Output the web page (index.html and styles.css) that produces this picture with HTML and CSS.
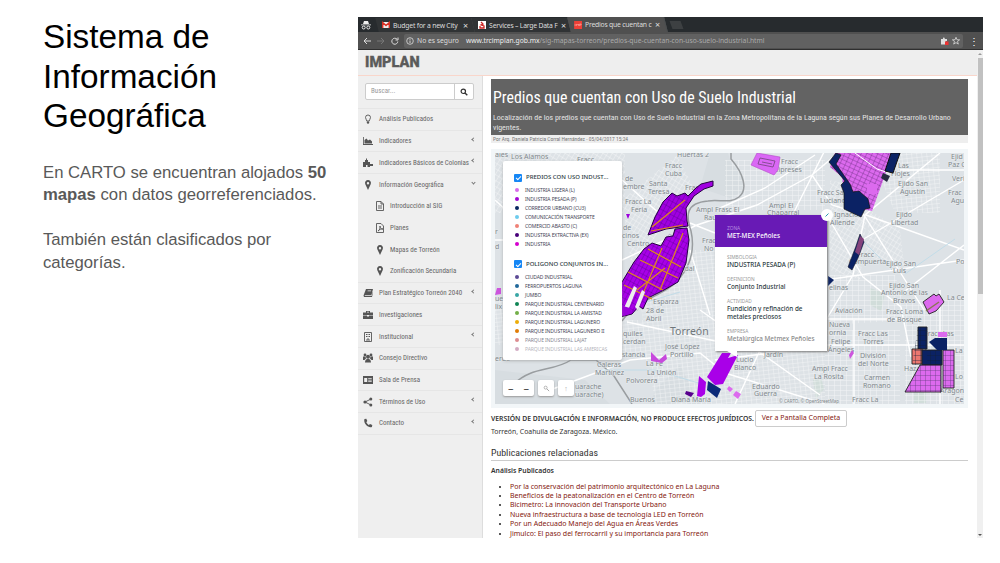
FILE: index.html
```html
<!DOCTYPE html>
<html lang="es">
<head>
<meta charset="utf-8">
<title>Sistema de Información Geográfica</title>
<link rel="stylesheet" href="styles.css">
</head>
<body>
<main class="slide">
<section class="intro">
<h1>Sistema de<br>Información<br>Geográfica</h1>
<p>En CARTO se encuentran alojados <b>50</b><br><b>mapas</b> con datos georreferenciados.</p>
<p>También están clasificados por<br>categorías.</p>
</section>
<section class="browser">
<div class="tabs">
<svg class="incog" viewBox="0 0 10 10"><path d="M3 1h4l1 3H2zM0 4.5h10v.8H0z" fill="#eee"/><circle cx="2.7" cy="7.5" r="1.5" fill="none" stroke="#eee"/><circle cx="7.3" cy="7.5" r="1.5" fill="none" stroke="#eee"/></svg>
<div class="tab"><svg class="fav" viewBox="0 0 8 8"><path fill="#eee" d="M0 1h8v6H0z"/><path d="M.7 7V1.5L4 4.500l3.300-3V7" fill="none" stroke="#d93025" stroke-width="1.4"/></svg><span class="label">Budget for a new City</span><i>×</i></div>
<div class="tab"><svg class="fav" viewBox="0 0 8 8"><path fill="#fff" d="M0 0h8v8H0z"/><path d="M3 1l2 2-2 1 3 1v2H2V5" fill="none" stroke="#c22" stroke-width="1.3"/></svg><span class="label">Services – Large Data F</span><i>×</i></div>
<div class="tab active"><svg class="fav" viewBox="0 0 8 8"><path fill="#ee4037" d="M0 0h8v8H0z"/><path d="M1 3v2M2.500 5V3l1 1 1-1v2M5.500 5V3H7v1H5.500" fill="none" stroke="#ffb0a8" stroke-width=".6"/></svg><span class="label">Predios que cuentan c</span><i>×</i></div>
<span class="newtab"></span>
</div>
<div class="toolbar">
<svg class="nav" viewBox="0 0 38 10"><path d="M9 5H2M5 2L2 5l3 3" stroke="#ddd" fill="none"/><path d="M15 5h7M19 2l3 3-3 3" stroke="#777" fill="none"/><path d="M35 3.200a3 3 0 1 0 .8 2.300M36 1.500v2.500h-2.500" stroke="#ddd" fill="none"/></svg>
<div class="address"><svg class="info" viewBox="0 0 8 8"><circle cx="4" cy="4" r="3.300" fill="none" stroke="#ddd" stroke-width=".8"/><path d="M4 3.500v2.500M4 1.800v1" stroke="#ddd" stroke-width=".9"/></svg><span class="insecure">No es seguro</span><span class="url"><b>www.trcimplan.gob.mx</b>/sig-mapas-torreon/predios-que-cuentan-con-uso-suelo-industrial.html</span>
<svg class="marks" viewBox="0 0 22 10"><path d="M2 3h2c-.5-2 2-2 1.800 0H8v2c-2-.5-2 2 0 2v1.500H2z" fill="#ddd"/><path d="M6 5.500h3.500V9H6z" fill="#e33"/><path d="M17 1.300l1 2.500h2.600l-2.100 1.700.8 2.600-2.300-1.500-2.300 1.500.8-2.600-2.100-1.700H16z" fill="none" stroke="#ddd" stroke-width=".8"/></svg></div>
<span class="dots">⋮</span>
</div>
<div class="page">
<div class="app">
<header>IMPLAN</header>
<div class="columns">
<nav>
<div class="search"><span>Buscar...</span><svg viewBox="0 0 8 8"><circle cx="3.300" cy="3.300" r="2.200" fill="none" stroke="#333" stroke-width="1.200"/><path d="M5 5l2.300 2.300" stroke="#333" stroke-width="1.400"/></svg></div>
<ul>
<li><svg viewBox="0 0 10 10"><path d="M2.500 3.500a2.500 2.500 0 1 1 5 0C7.500 5 6.300 5.500 6.200 7H3.800C3.700 5.500 2.500 5 2.500 3.500z" class="line"/><path d="M3.800 7.500h2.400V9L5 10 3.800 9z"/></svg><span>Análisis Publicados</span></li>
<li><svg viewBox="0 0 10 10"><path d="M0 1h.8v7H10v1H0zM1.500 7.500V4l2-1.500L5 4.500l2-1 2 2v2z"/></svg><span>Indicadores</span><em></em></li>
<li><svg viewBox="0 0 10 10"><path d="M0 4h2V2h1V.5h1V2h1v2h2v2h3v2H7v1H4.500V7H3v2H0z"/></svg><span>Indicadores Básicos de Colonias</span><em></em></li>
<li class="open"><svg viewBox="0 0 10 10"><path fill-rule="evenodd" d="M5 0a3 3 0 0 0-2.800 4L5 10l2.800-6A3 3 0 0 0 5 0zm0 2a1.200 1.200 0 1 1 0 2.400A1.200 1.200 0 0 1 5 2z"/></svg><span>Información Geográfica</span><em class="down"></em></li>
<li class="sub"><svg viewBox="0 0 10 10"><path d="M1.500.5h4.500l2.500 2.500v6.500h-7zM6 .5V3h2.500M3 5h4M3 7h4" class="line"/></svg><span>Introducción al SIG</span></li>
<li class="sub"><svg viewBox="0 0 10 10"><path d="M1.500.5h4.500l2.500 2.500v6.500h-7zM3 8c2-1 2-3 2-5 0 2 1 3 3 3-2 0-3 0-5 2" class="line"/></svg><span>Planes</span></li>
<li class="sub"><svg viewBox="0 0 10 10"><path fill-rule="evenodd" d="M5 0a3 3 0 0 0-2.800 4L5 10l2.800-6A3 3 0 0 0 5 0zm0 2a1.200 1.200 0 1 1 0 2.400A1.200 1.200 0 0 1 5 2z"/></svg><span>Mapas de Torreón</span></li>
<li class="sub last"><svg viewBox="0 0 10 10"><path fill-rule="evenodd" d="M5 0a3 3 0 0 0-2.800 4L5 10l2.800-6A3 3 0 0 0 5 0zm0 2a1.200 1.200 0 1 1 0 2.400A1.200 1.200 0 0 1 5 2z"/></svg><span>Zonificación Secundaria</span></li>
<li><svg viewBox="0 0 10 10"><path fill-rule="evenodd" d="M3 1h7L8.500 7H1.800v.8h7L9.700 4l.3.500L9 9H1L.5 7.500zM4.500 3.300h3.500l.2-.8H4.700z"/></svg><span>Plan Estratégico Torreón 2040</span><em></em></li>
<li><svg viewBox="0 0 10 10"><path fill-rule="evenodd" d="M3 1h4v1.500h3V5.500H6V5H4v.5H0v-3h3zm1 .8v.7h2v-.7zM0 6h4v.6h2V6h4v3H0z"/></svg><span>Investigaciones</span></li>
<li><svg viewBox="0 0 10 10"><path d="M1.500.5h7v9h-7zM4 9.500V7h2v2.500" class="line"/><path d="M3 2h1v1H3zm3 0h1v1H6zM4.500 2h1v1h-1zM3 4h1v1H3zm3 0h1v1H6zM4.500 4h1v1h-1z"/></svg><span>Institucional</span><em></em></li>
<li><svg viewBox="0 0 10 10"><circle cx="2" cy="2" r="1.400"/><circle cx="8" cy="2" r="1.400"/><circle cx="5" cy="3.700" r="2"/><path d="M0 3.500h2.500l.5 2L1.500 7H0zM10 3.500H7.500L7 5.500 8.500 7H10zM2 9.500c0-5 6-5 6 0z"/></svg><span>Consejo Directivo</span></li>
<li><svg viewBox="0 0 10 10"><path fill-rule="evenodd" d="M0 1h10v8H0zm1.200 2v4h3V3zm4 .3v.8h3.500v-.8zm0 1.500v.8h3.500v-.8zm0 1.500v.8h3.500v-.8z"/></svg><span>Sala de Prensa</span></li>
<li><svg viewBox="0 0 10 10"><path d="M8 2L2 5l6 3" class="line"/><circle cx="2" cy="5" r="1.600"/><circle cx="7.800" cy="2" r="1.500"/><circle cx="7.800" cy="8" r="1.500"/></svg><span>Términos de Uso</span><em></em></li>
<li><svg viewBox="0 0 10 10"><path d="M1.500 1l1.800-.3 1 2.300-1 1.200c.7 1.300 1.300 2 2.600 2.700L7 5.900l2.300 1.200-.4 1.800C5 10.500 0 5 1.500 1z"/></svg><span>Contacto</span><em></em></li>
</ul>
</nav>
<article>
<div class="hero"><h2>Predios que cuentan con Uso de Suelo Industrial</h2><p>Localización de los predios que cuentan con Uso de Suelo Industrial en la Zona Metropolitana de la Laguna según sus Planes de Desarrollo Urbano<br>vigentes.</p></div>
<div class="byline"><span>Por Arq. Daniela Patricia Corral Hernández - 05/04/2017 15:24</span></div>
<div class="map">
<svg class="canvas" viewBox="495 153 469 251">
<defs>
<pattern id="g1" width="5" height="4" patternUnits="userSpaceOnUse" patternTransform="rotate(-6)"><path d="M0 0H5M0 0V4" stroke="#fff" stroke-width="1"/></pattern>
<pattern id="g2" width="4" height="5" patternUnits="userSpaceOnUse" patternTransform="rotate(32)"><path d="M0 0H4M0 0V5" stroke="#fff" stroke-width="1"/></pattern>
<pattern id="g3" width="6" height="5" patternUnits="userSpaceOnUse"><path d="M0 0H6M0 0V5" stroke="#fff" stroke-width="1"/></pattern>
<pattern id="lot" width="4" height="6" patternUnits="userSpaceOnUse" patternTransform="rotate(28)"><path d="M0 0H4M0 0V6" stroke="#37006a" stroke-width=".5"/></pattern>
<pattern id="lotp" width="5" height="4" patternUnits="userSpaceOnUse" patternTransform="rotate(25)"><path d="M0 0H5M0 0V4" stroke="#602878" stroke-width=".7"/></pattern>
<pattern id="lotn" width="5" height="5" patternUnits="userSpaceOnUse"><path d="M0 0H5M0 0V5" stroke="#111e35" stroke-width=".7"/></pattern>
</defs>
<path fill="#dde2e6" d="M495 153h469v251H495z"/>
<path fill="#d7dde1" d="M710 153h18l3 10 13 15-2 14-12 6-30-10zM495 370l90 10 25 24H495zM655 390l25-25 20 39h-50z"/>
<path fill="#d1ddda" d="M870 288l15 5-4 18-11-6zM813 380l8-3 3 12-8 10zM914 392l12-3v14h-12z"/>
<g opacity=".65"><path fill="url(#g2)" d="M495 153h130v60H495zM622 200l55-45 15 30-60 85zM830 180l40 10-10 90-30-10zM870 210l30 20 5 40-40-15z"/><path fill="url(#g1)" d="M640 300l55-50 20 0v154h-60zM715 340l110 10v54H715zM622 320h40v50l-40-20zM870 153h70v60h-45zM495 300h127v45H495z"/><path fill="url(#g3)" d="M825 330h75v74h-75zM830 275h65l15 45-80 5zM725 160h100v50H725zM905 300h59v104h-59z"/></g>
<g fill="none" stroke="#fff" stroke-width="1.400"><path d="M622 260l75-35 60-20 55-30 26-22M720 208l45-20 50-33M690 223l25 10M812 175l20 30 32 10 60 95M940 153l-75 62-12 60-30 50M827 345h137M825 280l139-20M870 155v15M495 200l60 55M550 390l80-30 70-7 25 20 100 31M700 310l120 85M715 360l109-14M854 320v84M940 290v114M825 212l38 65 38 30 10 50M900 170h64M866 215l98 35M824 152l-30 60M622 180l50 45M690 250l20 65M825 319h90M627 322l93 20M760 350l-25 54M495 240h30M862 240l102-60M900 295l64-50"/></g>
<path d="M731 153v6c13 15 17 31 8 38s-20 2-31 4c-23 2-22 15-17 30 4 18-1 35-12 48-14 17-41 19-57 42M514 384c18-18 39-12 57-24l25 0 18 16 18 28" fill="none" stroke="#999da0" stroke-width="1.500"/>
<path d="M600 370h55l50 15M630 307l50-15M862 240l30 30M905 274l50-35" fill="none" stroke="#c2dce8" stroke-width="1"/>
<g class="places">
<text x="511" y="159">Los Alamos</text><text x="495" y="157">ales</text><text x="577" y="162">Fracc</text><text x="677" y="157">Huertas 2</text><text x="665" y="168">Fracc</text><text x="665" y="175.500">Cuba</text><text x="649" y="186">Santa</text><text x="648" y="193.500">Teresa</text><text x="625" y="181">de</text><text x="623" y="188.500">embre</text><text x="625" y="204">Fracc La</text><text x="631" y="211.500">Feria</text><text x="685" y="190">Fracc</text><text x="696" y="212">Ampl Frasc El</text><text x="704" y="219.500">Raúl</text><text x="769" y="208">Ampl El</text><text x="767" y="215">Chaparral</text><text x="781" y="164">Fracc</text><text x="774" y="171.500">Cipreses</text><text x="817" y="195">Fracc San</text><text x="820" y="202.500">Luciano</text><text x="834" y="217">Ignacio</text><text x="830" y="224.500">Allende</text><text x="898" y="186">Ejido San</text><text x="900" y="193.500">Agustín</text><text x="896" y="217">Ejido</text><text x="891" y="224.500">Libertad</text><text x="898" y="168">Las</text><text x="891" y="175.500">Flojes</text><text x="951" y="159">Ejid</text><text x="948" y="166.500">Paz C</text><text x="952" y="181">Veri</text><text x="948" y="195">Frac</text><text x="951" y="202.500">Agu</text><text x="956" y="264">Po</text><text x="857" y="256.500">Fracc</text><text x="849" y="264">Compuerta</text><text x="886" y="266">Ejido San</text><text x="893" y="273">Luis</text><text x="702" y="243">Frac</text><text x="704" y="250.500">No</text><text x="677" y="271">Ejidal</text><text x="623" y="230">de</text><text x="622" y="238">cinos</text><text x="627" y="246">Centro</text><text x="653" y="304">Esparza</text><text x="646" y="313">28 de</text><text x="646" y="320.500">Abril</text><text x="623" y="336">quiles</text><text x="623" y="343.500">cerdan</text><text x="622" y="357">stancia</text><text x="597" y="367">Caleras</text><text x="595" y="374.500">Martínez</text><text x="665" y="349">José López</text><text x="670" y="356.500">Portillo</text><text x="646" y="366">La Fe</text><text x="647" y="375">La Unión</text><text x="626" y="383">Polvorera</text><text x="630" y="402">Buenos</text><text x="671" y="402">Diana María</text><text x="736" y="362">Lucio</text><text x="734" y="369.500">Blanco</text><text x="764" y="357">Jardín</text><text x="752" y="388.500">Eduardo</text><text x="754" y="396">Guerra</text><text x="812" y="371">Ampl Fracc</text><text x="814" y="378.500">La Rosita</text><text x="829" y="290">elinas</text><text x="835" y="313">Aviación</text><text x="829" y="327">Nueva</text><text x="829" y="334.500">ornia</text><text x="831" y="344">Felipe</text><text x="828" y="351.500">Ángeles</text><text x="858" y="336">Fracc Las</text><text x="863" y="343.500">Torres</text><text x="860" y="358">División</text><text x="858" y="365.500">del Norte</text><text x="864" y="380">Carmen</text><text x="863" y="387.500">Romano</text><text x="852" y="402">Fracc La</text><text x="889" y="288">Ejido San</text><text x="881" y="295">Antonio de las</text><text x="893" y="302.500">Bravos</text><text x="886" y="314">Fracc Loma</text><text x="887" y="321.500">de Bosque</text><text x="947" y="300">La Ce</text><text x="924" y="336">Fracc Las</text><text x="955" y="353">La</text><text x="955" y="379">Lo</text><text x="940" y="393">Aragon</text><text x="904" y="371">Haza</text><text x="955" y="402">Ce</text><text x="575" y="389">uarache</text><text x="575" y="396.500">uarache)</text><text x="495" y="234">r</text><text x="495" y="249">d</text><text x="495" y="361">erdo</text><text x="495" y="301">ue</text><text x="495" y="308.500">lix</text><text x="670" y="335" class="city">Torreón</text><text x="779" y="403" class="credit">© CARTO, © OpenStreetMap</text>
</g>
<path d="M648 235l7-18 8-15 9-9 5 3 8-3 3 3 8-8 5-4 12-3v5l-9 3-10 7-8 12 1 13 1 5-22 3z" fill="#a000e0" stroke="#260044"/>
<path d="M616 292l18-30 10-13 8-6 9 3 5-9 7-1 2-7 12-1 2 12-3 23-8 19-14 8-16 8-5 11-4-3-7 8-16 4z" fill="#a800e8" stroke="#260044"/>
<path d="M648 235l7-18 8-15 9-9 5 3 8-3 3 3 8-8 5-4-8 12-8 12 1 18-22 3zM616 292l18-30 10-13 8-6 9 3 5-9 9-8 12-1 2 12-3 23-8 19-30 16-6 11-26 9z" fill="url(#lot)"/>
<path d="M652 227l33-27M651 231l32-6M628 272l35 18M640 260l38 18M648 249l33 18M662 248l-20 48M683 233l-23 57M624 285l28 14M637 290l28-22" fill="none" stroke="#df8d16" stroke-width="1.200"/>
<path d="M634 286l3 2-8 20-5 0zM642 290l3 2-7 18-3-3z" fill="#eee"/><path d="M616 304l14 4 2 5-8 3zM626 214h4l-2 5z" fill="#9c00dc"/>
<path d="M757 153l23 4-2 13-4 5-23-10z" fill="#da68f5" stroke="#b148c7" stroke-width=".6"/><path d="M760 158l15 3-2 6-15-3zM762 162l10 2" fill="none" stroke="#72457e" stroke-width=".8"/>
<path d="M835 153h58l-21 58-19-4-9-16-2-14-12-10z" fill="#dc6aee"/><path d="M835 153h58l-21 58-19-4-9-16-2-14-12-10z" fill="url(#lotp)"/>
<path d="M855 153l22 16 12 4" fill="none" stroke="#fff" stroke-width="1"/>
<path d="M829 162l7-9 5 2-5 9 14 20 3 8 6-1 9 8 2 9-5 1-4 8-17-8v-16l-3-8 4-4z" fill="#0b2264" stroke="#111" stroke-width=".7"/><path d="M867 184h10v10h-10z" fill="#dc6aee"/>
<path d="M891 153h9l-7 20-8-2z" fill="#0b2264" stroke="#111"/><path d="M883 173l7 3-3 6-6-4z" fill="#292b43"/>
<path d="M860 234l-4 12-8 21 4 3 6-12 6-16z" fill="#0b2264" stroke="#17172a" stroke-width=".6"/><path d="M860 236l4 3-5 16-4-3z" fill="#84437c"/>
<path d="M828 276l6 4-6 6z" fill="#0b2264"/><path d="M852 350l2 3-4 6-1-4zM497 288h4v6l-6 1z" fill="#cc55dd"/>
<path d="M722 353l9 0-3 5 10-3-15 29-8 1-8-8zM699 376l7 6-1 12-4 3-4-1z" fill="#a900e8"/><path d="M708 381l13 8-4 9-10-8z" fill="#0b2a78"/><path d="M686 391l8 2-3 4-6-3z" fill="#58008d"/><path d="M651 352l8 8 7-6 1 5-5 4-11-2z" fill="#c749dd"/><path d="M729 386l4 3-3 3-3-3zM736 391l5 3-3 5-5-4z" fill="#dc6aee"/>
<g stroke="#222" stroke-width=".9"><path d="M923 302l11-8 2 2 3-2 5 8-8 9-7 3z" fill="#dc6aee"/><path d="M918 327h9v22h-9z" fill="#0b2264"/><path d="M912 349h10v15h-10z" fill="#eb7770"/><path d="M922 350h20v15h-20z" fill="#0b2264"/><path d="M920 365h21v27h-36z" fill="#dc6aee"/><path d="M943 350h11v38h-11z" fill="#dc6aee"/></g>
<path d="M918 327h9v38h15v-15h-20v15h-10z" fill="url(#lotn)"/><path d="M920 365h21v27h-36zM943 350h11v38h-11z" fill="url(#lotn)" opacity=".65"/><path d="M929 342l6-4h12v12h-10z" fill="#0b2264"/><path d="M938 332h9v5h-9z" fill="#dc6aee"/><path d="M926 311l13-9" stroke="#8a7754" stroke-width="1.500"/>
</svg>
<div class="legend">
<h3><i class="check"></i>PREDIOS CON USO INDUST...</h3>
<ul><li class="c1">INDUSTRIA LIGERA (L)</li><li class="c2">INDUSTRIA PESADA (P)</li><li class="c3">CORREDOR URBANO (CU3)</li><li class="c4">COMUNICACIÓN TRANSPORTE</li><li class="c5">COMERCIO ABASTO (C)</li><li class="c6">INDUSTRIA EXTRACTIVA (EX)</li><li class="c7">INDUSTRIA</li></ul>
<h3><i class="check"></i>POLIGONO CONJUNTOS IN...</h3>
<ul><li class="d1">CIUDAD INDUSTRIAL</li><li class="d2">FERROPUERTOS LAGUNA</li><li class="d3">JUMBO</li><li class="d4">PARQUE INDUSTRIAL CENTENARIO</li><li class="d5">PARQUE INDUSTRIAL LA AMISTAD</li><li class="d6">PARQUE INDUSTRIAL LAGUNERO</li><li class="d7">PARQUE INDUSTRIAL LAGUNERO II</li><li class="d8">PARQUE INDUSTRIAL LAJAT</li><li class="d9">PARQUE INDUSTRIAL LAS AMERICAS</li></ul>
</div>
<div class="controls"><span class="zoom"><b>–</b><b>–</b></span><span><svg viewBox="0 0 8 8"><circle cx="3" cy="3" r="1.700" fill="none" stroke="#999" stroke-width=".8"/><path d="M4.500 4.500l2.500 2.500" stroke="#999"/></svg></span><span>↑</span></div>
<div class="popup"><div class="pophead"><small>ZONA</small><strong>MET-MEX Peñoles</strong></div><div class="popbody"><small>SIMBOLOGIA</small><strong>INDUSTRIA PESADA (P)</strong><small>DEFINICION</small><strong>Conjunto Industrial</strong><small>ACTIVIDAD</small><strong>Fundición y refinación de<br>metales preciosos</strong><small>EMPRESA</small><strong class="fade">Metalúrgica Metmex Peñoles</strong></div><i class="tail"></i><span class="close"><svg viewBox="0 0 8 8"><path d="M2.500 5.500l3-3" stroke="#2c9bb0"/></svg></span></div>
</div>
<div class="notice"><b>VERSIÓN DE DIVULGACIÓN E INFORMACIÓN, NO PRODUCE EFECTOS JURÍDICOS.</b><span class="button">Ver a Pantalla Completa</span></div>
<p class="place">Torreón, Coahuila de Zaragoza. México.</p>
<h4>Publicaciones relacionadas</h4>
<h5>Análisis Publicados</h5>
<ul class="links"><li><span>Por la conservación del patrimonio arquitectónico en La Laguna</span></li><li><span>Beneficios de la peatonalización en el Centro de Torreón</span></li><li><span>Bicimetro: La innovación del Transporte Urbano</span></li><li><span>Nueva infraestructura a base de tecnología LED en Torreón</span></li><li><span>Por un Adecuado Manejo del Agua en Áreas Verdes</span></li><li><span>Jimulco: El paso del ferrocarril y su importancia para Torreón</span></li></ul>
</article>
</div>
</div>
<div class="scroll"><i class="arrow up"></i><i class="thumb"></i><i class="arrow"></i></div>
</div>
</section>
</main>
</body>
</html>
```
FILE: styles.css
```css
* { box-sizing: border-box; }
body { margin: 0; background: #fff; font-family: "Noto Sans", sans-serif; }
h1, h2, h3, h4, h5, p, ul { margin: 0; padding: 0; font-weight: normal; }
ul { list-style: none; }
i, em { font-style: normal; }
.slide { display: flex; width: 1000px; height: 563px; padding-top: 17px; overflow: hidden; }
.intro { width: 358px; padding-left: 43px; flex: none; font-family: "Liberation Sans", Arial, sans-serif; color: #595959; }
h1 { font-size: 33.3px; line-height: 39.5px; color: #000; margin-bottom: 26px; }
.intro p { font-size: 16.7px; line-height: 22.8px; margin-bottom: 22.4px; white-space: nowrap; }
.browser { width: 625px; height: 521px; display: flex; flex-direction: column; overflow: hidden; background: #fff; }

.tabs { height: 15px; flex: none; background: #272b2e; display: flex; align-items: center; padding-left: 3px; color: #ddd; font-size: 6.8px; }
.incog { width: 10px; height: 10px; margin-right: 7px; }
.tab { width: 97px; height: 14px; padding: 0 5px; display: flex; align-items: center; gap: 3px; background: #303335; transform: skewX(14deg); margin-left: -1px; border-right: 1px solid #4a4d4f; }
.tab > * { transform: skewX(-14deg); }
.tab.active { background: #505050; height: 15px; }
.fav { width: 8px; height: 8px; flex: none; }
.label { flex: 1; white-space: nowrap; letter-spacing: -.2px; }
.tab i { font-size: 9px; }
.newtab { width: 11px; height: 8px; background: #3d4042; transform: skewX(20deg); margin-left: 5px; }
.toolbar { height: 18px; flex: none; background: #505050; display: flex; align-items: center; border-bottom: 1px solid #2f2f2f; font-size: 6.75px; color: #ddd; padding: 0 4px 0 3px; }
.nav { width: 40px; height: 10px; margin-right: 3px; }
.address { flex: 1; height: 14px; background: #616161; border-radius: 2px; display: flex; align-items: center; padding: 0 2px; white-space: nowrap; }
.info { width: 8px; height: 8px; margin-right: 3px; }
.insecure { width: 49px; }
.url { flex: 1; color: #aaa; }
.url b { font-weight: normal; color: #eee; }
.marks { width: 22px; height: 10px; }
.dots { width: 16px; text-align: right; font-size: 10px; color: #fff; }

.page { flex: 1; min-height: 0; display: flex; }
.app { width: 619px; display: flex; flex-direction: column; overflow: hidden; }
header { height: 26px; flex: none; background: #eee; border-bottom: 1px solid #f9d6cb; padding-left: 7px; font: 900 14.5px/26px Roboto, sans-serif; color: #5b5b5b; -webkit-text-stroke: .3px #5b5b5b; }
.columns { display: flex; flex: 1; min-height: 0; }
nav { width: 125px; flex: none; background: #efefef; border-right: 1px solid #ddd; color: #666; }
.search { margin: 7px 8px 8px 7px; height: 17px; border: 1px solid #ccc; border-radius: 2px; background: #fff; display: flex; font: 7px/15px "Roboto Condensed", Roboto, sans-serif; color: #999; }
.search span { flex: 1; padding-left: 5px; border-right: 1px solid #ccc; }
.search svg { width: 8px; height: 8px; margin: 4px 5px; }
nav li { height: 21.72px; padding: 0 7px 0 5px; border-top: 1px solid #e6e6e6; display: flex; align-items: center; gap: 5px; font: 7px/10px "Roboto Condensed", Roboto, sans-serif; font-stretch: 75%; white-space: nowrap; }
nav li:last-child { border-bottom: 1px solid #e6e6e6; height: 22.72px; }
nav li svg { width: 10px; height: 10px; flex: none; fill: #555; }
nav li .line { fill: none; stroke: #555; stroke-width: .9; }
nav li span { flex: 1; width: 0; margin-left: 1px; }
nav .sub { border-color: transparent; padding-left: 17px; }
nav .sub span { margin-left: 0; }
nav em { width: 3px; height: 3px; border-left: 1px solid #777; border-bottom: 1px solid #777; transform: rotate(45deg); margin-top: -4px; }
nav em.down { transform: rotate(-45deg); }
article { width: 494px; padding: 3px 9px 0 8px; color: #333; }
.hero { height: 56px; background: #636363; color: #fff; padding: 9px 2px 0; white-space: nowrap; font-family: "Roboto Condensed", Roboto, sans-serif; font-stretch: 75%; }
h2 { font-size: 15.9px; line-height: 19px; }
.hero p { font-size: 7.93px; line-height: 9.5px; margin-top: 6px; color: #e4e4e4; }
.byline { height: 8px; background: #eee; font: 5.5px/8px "Roboto Condensed", Roboto, sans-serif; color: #777; padding-left: 2px; }
.map { position: relative; margin-top: 6px; width: 477px; height: 259px; padding: 4px; background: #f2f6f8; }
.canvas { display: block; width: 469px; height: 251px; }
.places { font: 7px "Noto Sans", sans-serif; fill: #80878c; stroke: #e8ecee; stroke-width: 1px; paint-order: stroke; }
.places .city { font-size: 10.5px; fill: #70777c; }
.places .credit { font-size: 4.5px; }
.legend { position: absolute; left: 12px; top: 12px; width: 119px; height: 199px; background: #fff; border-radius: 2px; padding: 11px 0 0 11px; overflow: hidden; box-shadow: 0 1px 3px #8888; font-size: 5px; }
.legend h3 { display: flex; align-items: center; gap: 4px; font-size: 6px; line-height: 11px; font-weight: 500; color: #2e3c43; white-space: nowrap; }
.check { width: 8px; height: 8px; background: #1687f5; border-radius: 1px; display: grid; place-items: center; }
.check::after { content: ""; width: 4px; height: 2px; border-left: 1px solid #fff; border-bottom: 1px solid #fff; transform: rotate(-45deg); }
.legend ul { margin: 3px 0 10px; }
.legend li { display: flex; align-items: center; height: 8.95px; color: #445; white-space: nowrap; letter-spacing: -.1px; }
.legend li::before { content: ""; width: 4px; height: 4px; border-radius: 50%; background: var(--dot); margin: 0 6px 0 1px; }
.c1 { --dot: #d86bea; } .c2 { --dot: #a207d5; } .c3 { --dot: #08265f; } .c4 { --dot: #6dcbed; } .c5 { --dot: #ef8177; } .c6 { --dot: #480079; } .c7 { --dot: #d500ce; }
.d1 { --dot: #5c4a95; } .d2 { --dot: #21689a; } .d3 { --dot: #38a6a5; } .d4 { --dot: #0f8554; } .d5 { --dot: #73af48; } .d6 { --dot: #edad08; } .d7 { --dot: #e17c05; }
.d8 { --dot: #cc5055; opacity: .65; } .d9 { --dot: #94346e; opacity: .4; }
.controls { position: absolute; left: 12px; top: 231px; display: flex; gap: 4px; }
.controls span { width: 16px; height: 16px; border-radius: 2px; background: #fff; box-shadow: 0 1px 2px #999; display: grid; place-items: center; font-size: 7px; color: #aaa; }
.controls svg { width: 7px; height: 7px; }
.controls .zoom { width: 31px; grid-template-columns: 1fr 1fr; color: #444; font-size: 11px; line-height: 12px; }
.zoom b { font-weight: normal; }
.popup { position: absolute; left: 224px; top: 66px; width: 112px; height: 136px; background: #fff; box-shadow: 1px 1px 2px #777; }
.pophead { height: 32px; background: #681ab5; padding: 10px 12px; color: #fff; }
.popbody { padding: 7px 12px; color: #2e3c43; }
.popup small { display: block; font-size: 4.8px; line-height: 6px; color: #999; }
.popup .pophead small { color: #b58be0; }
.popup strong { display: block; font-size: 6.3px; line-height: 7.5px; font-weight: 500; margin: 1px 0 7.5px; white-space: nowrap; }
.popup .fade { color: #888; }
.tail { position: absolute; left: 12px; top: 136px; border: solid transparent; border-width: 6px 0 0 10px; border-top-color: #fff; }
.close { position: absolute; right: -6px; top: -6px; width: 12px; height: 12px; border-radius: 50%; background: #fff; padding: 2px; }
.close svg { display: block; width: 8px; height: 8px; }
.notice { height: 18px; margin-top: 1px; display: flex; align-items: center; font-size: 6.8px; white-space: nowrap; }
.notice b { font-weight: 600; width: 264px; }
.button { height: 17px; width: 92px; text-align: center; line-height: 14px; border: 1px solid #ccc; border-radius: 2px; color: #842010; font-size: 7px; }
.place { font-size: 6.85px; line-height: 12px; margin-top: -1px; }
h4 { font: 9.9px/14px "Roboto Condensed", Roboto, sans-serif; border-bottom: 1px solid #ccc; margin-top: 8px; white-space: nowrap; }
h5 { font-size: 6.8px; font-weight: 600; line-height: 10px; margin-top: 5px; }
.links { margin-top: 5.5px; padding-left: 19px; list-style: disc; font-size: 7px; line-height: 9.4px; color: #842010; }
.links li::marker { color: #222; }
.scroll { width: 6px; background: #f0f0f0; display: flex; flex-direction: column; align-items: center; }
.thumb { width: 5px; height: 236px; margin-top: 3px; background: #c1c1c1; }
.arrow { margin-top: auto; margin-bottom: 2px; border: 2px solid transparent; border-top-color: #555; border-bottom: 0; }
.arrow.up { margin: 3px 0 0; border: 2px solid transparent; border-bottom-color: #999; border-top: 0; }
```
